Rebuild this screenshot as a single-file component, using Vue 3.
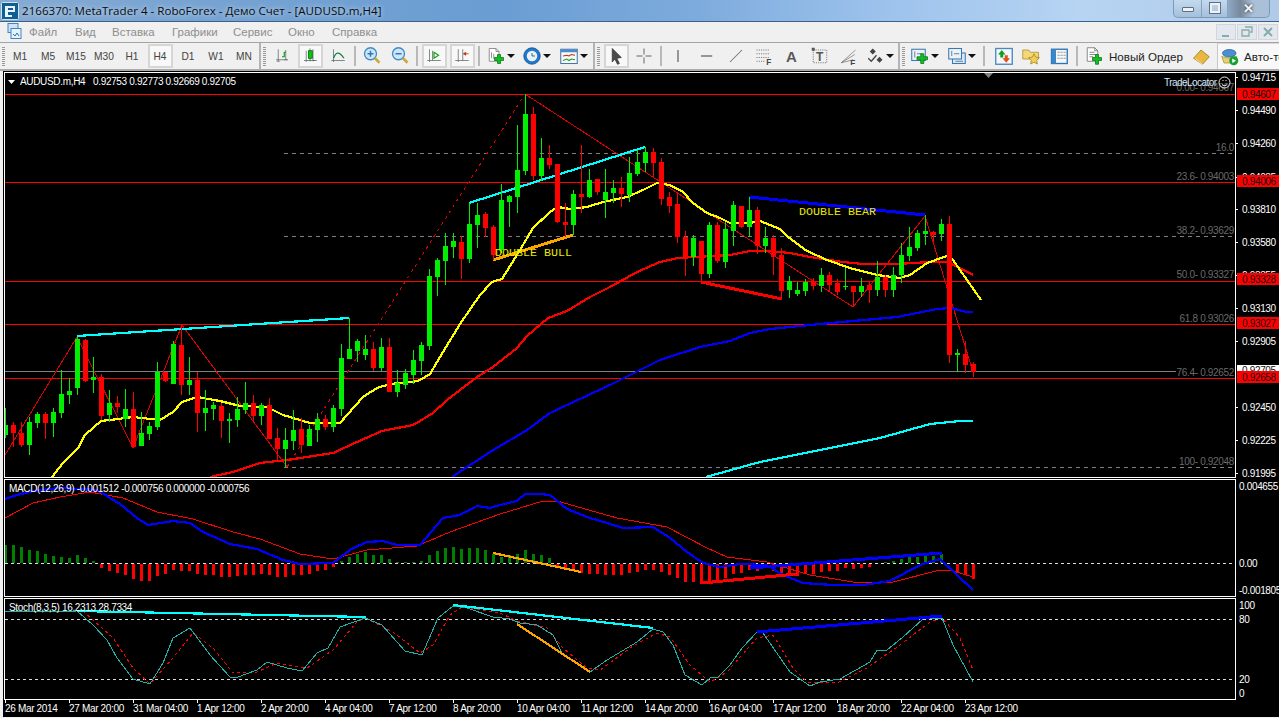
<script setup>
const candles = [
[1,408,438,425,435],[0,422,447,425,433],[0,422,447,433,445],[1,417,455,422,445],[1,412,428,414,423],[0,412,439,414,423],[1,408,437,412,423],[1,370,418,394,413],[1,378,404,391,395],[1,337,395,339,388],
[0,339,382,340,381],[1,357,393,377,380],[0,374,420,377,416],[1,390,422,403,415],[0,396,413,403,407],[1,389,427,409,419],[0,392,448,409,447],[1,412,446,433,446],[1,422,440,426,434],[1,362,430,372,427],
[0,372,382,372,381],[1,341,384,344,384],[0,325,395,345,385],[1,357,395,380,385],[0,372,432,380,413],[1,390,431,408,413],[1,402,420,405,409],[0,403,438,406,421],[1,413,443,419,421],[1,397,427,409,420],
[1,382,414,403,410],[0,395,422,403,416],[1,403,425,405,416],[0,398,439,405,439],[0,428,460,438,449],[1,428,467,440,449],[1,410,450,430,441],[0,418,453,429,445],[1,425,446,429,446],[1,413,442,419,430],
[0,415,430,419,427],[1,405,432,408,427],[1,344,416,358,409],[1,318,359,349,359],[1,339,362,341,351],[1,335,360,349,355],[0,342,371,349,368],[1,338,371,347,368],[0,338,392,347,392],[1,370,397,383,392],
[1,369,389,373,385],[1,350,384,360,375],[1,342,375,345,361],[1,269,350,276,346],[1,258,296,260,277],[1,233,285,246,261],[1,233,258,241,247],[0,236,279,242,259],[1,203,263,224,259],[1,203,248,215,225],
[0,212,237,214,228],[0,225,260,227,255],[1,184,253,200,250],[1,195,227,196,202],[1,125,213,170,197],[1,94,175,114,171],[0,107,180,114,176],[1,138,181,158,176],[0,145,169,158,165],[0,164,223,164,222],
[0,203,237,222,225],[1,190,235,194,225],[0,145,213,194,197],[1,169,198,180,197],[0,179,195,179,192],[1,169,218,192,200],[1,180,203,188,193],[0,177,207,188,194],[1,157,202,173,195],[1,150,176,162,174],
[1,147,172,152,163],[0,148,177,152,163],[0,158,205,162,199],[0,192,213,197,206],[0,193,243,204,237],[0,231,276,237,257],[1,235,266,238,257],[0,241,282,241,274],[1,222,278,225,274],[0,222,263,225,261],
[1,222,268,229,262],[1,201,246,205,231],[0,206,228,206,227],[1,197,237,210,227],[0,207,254,210,246],[1,227,253,238,246],[0,235,275,238,257],[0,248,299,255,291],[1,276,298,281,290],[1,282,296,290,294],
[1,279,296,282,291],[0,278,290,282,286],[1,268,292,275,286],[0,272,292,275,285],[0,279,295,283,292],[1,268,290,286,287],[0,286,307,286,292],[1,278,297,286,292],[0,281,303,285,290],[1,261,296,277,290],
[0,275,297,277,290],[1,267,297,275,290],[1,243,283,255,275],[1,227,261,247,256],[1,230,251,233,248],[1,215,245,231,234],[0,231,242,232,235],[1,219,241,224,234],[0,216,363,224,355],[1,349,372,353,355],
[0,341,373,354,365],[0,362,377,364,372]
].map(([g,h,l,t,b],i)=>({g,h,l,t,b,x:5+8*i}))

const macd = [18,18,16,13,12,9,7,6,5,8,5,2,-4,-7,-9,-11,-15,-17,-17,-12,-10,-6,-7,-7,-10,-11,-11,-13,-13,-12,-11,-11,-10,-11,-13,-13,-11,-11,-10,-7,-6,-3,2,6,9,11,8,8,4,1,1,1,2,8,12,15,16,14,15,15,13,9,
6,8,9,13,9,8,5,-3,-6,-7,-9,-10,-10,-11,-11,-11,-9,-8,-6,-6,-8,-11,-14,-18,-18,-20,-20,-18,-14,-10,-9,-6,-7,-4,-7,-10,-11,-12,-10,-10,-8,-7,-7,-4,-5,-4,-3,0,1,2,4,6,6,7,7,9,0,-9,-11,-15]
  .map((v,i)=>({x:4+8*i,y:v>0?563-v:564,h:Math.abs(v),g:v>0}))

const yellow='52,477 63,463 78,448 85,435 101,421 118,419 133,417 160,420 173,412 182,402 197,397 220,401 240,406 267,407 283,415 310,423 340,423 363,397 377,388 390,384 413,382 420,380 430,374 440,357 460,324 480,295 492,282 502,279 520,250 533,228 550,212 558,207 570,209 587,207 603,202 627,197 643,190 657,183 670,185 683,192 693,203 707,213 720,218 730,223 750,223 760,221 780,229 788,237 807,251 827,260 850,268 877,275 900,278 910,275 927,263 947,256 953,260 967,280 981,300'
const redMa='210,477 233,472 260,463 287,460 333,453 357,442 382,431 413,425 420,421 433,413 447,400 477,377 493,367 517,348 527,336 548,318 567,311 590,297 610,287 637,272 660,262 678,258 730,255 750,251 770,251 790,253 810,257 843,262 863,264 897,264 930,262 947,262 960,268 973,275'
const blueMa='452,477 490,452 527,430 550,413 610,385 660,360 700,347 730,341 750,333 770,329 820,324 853,321 897,317 937,309 950,308 967,312 973,312'
const cyanMa='706,477 760,462 820,450 880,438 930,424 960,421 973,421'
const macdBlue='5,499 17,495 33,491 60,488 97,490 120,504 137,518 148,525 173,521 190,523 203,532 230,544 257,549 283,560 300,564 333,563 353,548 367,542 383,541 397,545 420,545 443,518 460,515 477,506 490,508 500,505 517,501 525,494 540,494 550,495 567,509 587,517 623,528 653,527 670,538 687,552 703,563 720,567 740,564 767,565 783,575 803,583 833,585 863,585 890,581 920,565 940,559 957,575 973,590'
const macdRed='5,518 33,503 60,497 90,492 123,498 157,512 193,519 233,532 260,539 300,554 333,559 367,550 417,546 450,532 500,514 520,508 543,501 557,501 617,518 667,527 707,548 727,557 767,562 810,575 853,582 893,582 940,570 950,570 973,577'
const stMain='5,612 77,611 93,625 107,640 117,658 133,679 150,684 163,663 173,638 190,628 210,655 230,677 238,677 257,670 267,662 287,668 302,671 317,653 328,648 340,627 365,618 382,625 405,651 422,655 438,618 453,606 467,608 493,617 510,619 520,623 537,625 553,635 563,655 590,672 607,660 637,642 653,629 663,632 673,645 685,675 702,685 710,678 718,677 730,665 742,648 757,632 763,633 790,672 810,686 820,682 840,679 870,662 877,650 887,650 903,637 923,619 942,618 953,645 973,682'
const stSig='5,612 83,611 113,638 133,668 150,684 173,658 193,633 213,648 233,673 257,672 277,663 307,668 333,650 357,622 365,618 393,632 420,653 433,645 450,615 462,607 500,613 517,621 547,628 563,648 587,668 600,670 633,646 657,633 670,637 690,665 710,682 727,672 757,638 773,635 793,668 807,682 837,683 867,668 900,645 930,622 942,618 960,638 973,670'

const redLines=[94,182,281,324,378]
const fibLines=[153,182,236,467]
const fibLabels=[['0.00- 0.94607',91],['16.0',151],['23.6- 0.94003',180],['38.2- 0.93629',234],['50.0- 0.93327',278],['61.8 0.93026',322],['76.4- 0.92652',376],['100- 0.92048',465]]
const priceLabels=[['0.94715',77],['0.94490',110],['0.94260',143],['0.94035',177],['0.93810',209],['0.93580',242],['0.93355',275],['0.93130',308],['0.92905',341],['0.92450',407],['0.92225',440],['0.91995',473]]
const redLabels=[['0.94607',94],['0.94006',181],['0.93328',279],['0.93027',323],['0.92658',377]]
const sideLabels=[['0.004655',486],['0.00',563],['-0.001805',590],['100',605],['80',619],['20',679],['0',693]]
const times=['26 Mar 2014','27 Mar 20:00','31 Mar 04:00','1 Apr 12:00','2 Apr 20:00','4 Apr 04:00','7 Apr 12:00','8 Apr 20:00','10 Apr 04:00','11 Apr 12:00','14 Apr 20:00','16 Apr 04:00','17 Apr 12:00','18 Apr 20:00','22 Apr 04:00','23 Apr 12:00']
  .map((t,i)=>({t,x:5+64*i}))

const menu=[['Файл',29],['Вид',75],['Вставка',112],['Графики',172],['Сервис',233],['Окно',288],['Справка',332]]
  .map(([t,x],i,a)=>({t,w:(i<a.length-1?a[i+1][1]:x+60)-x}))

const ax='#5a676e'
const icons={
 bars:`<path d="M7 3v16M4 17h16M17 4v13M15 17h4M5 19h4" stroke="${ax}" fill="none"/><path d="M12 13h3V7h2" stroke="#00a000" fill="none" stroke-width="1.5"/>`,
 candle:`<path d="M7 5v15M4 18h17M16 3v16M14 18h5" stroke="${ax}" fill="none"/><path d="M12 2v17" stroke="#206020"/><rect x="10" y="5" width="5" height="10" fill="#00d000" stroke="#105010"/>`,
 line:`<path d="M6 3v17M3 18h18" stroke="${ax}" fill="none"/><path d="M6 15C9 7 13 5 20 15" stroke="#108040" stroke-width="1.6" fill="none"/>`,
 zin:`<circle cx="10" cy="9" r="8" fill="#cfe6f7" stroke="#3f8cc8" stroke-width="1.8"/><path d="M6 9h8M10 5v8" stroke="#2f78b8" stroke-width="2"/><path d="M16 15l6 6" stroke="#d0a838" stroke-width="3.500"/>`,
 zout:`<circle cx="10" cy="9" r="8" fill="#cfe6f7" stroke="#3f8cc8" stroke-width="1.8"/><path d="M6 9h8" stroke="#2f78b8" stroke-width="2"/><path d="M16 15l6 6" stroke="#d0a838" stroke-width="3.500"/>`,
 shift:`<path d="M6 3v17M3 18h18M10 5v13" stroke="${ax}" fill="none"/><path d="M12 7l6 4-6 4z" fill="#fff" stroke="#10a010" stroke-width="1.6"/>`,
 scroll:`<path d="M7 3v17M3 18h18M13 3v15" stroke="${ax}" fill="none"/><path d="M14 9h7M14 9l3-2v4z" stroke="#c03010" fill="#c03010"/>`,
 newch:`<path d="M3 2h9l4 4v13H3z" fill="#fff" stroke="#707070"/><path d="M12 2v4h4M6 7v8M9 9v7" stroke="#707070" fill="none"/><path d="M14 10h4v4h4v4h-4v4h-4v-4h-4v-4h4z" fill="#10c020" stroke="#087010"/>`,
 clock:`<circle cx="12" cy="12" r="11" fill="#1f79c8" stroke="#0d4f90"/><circle cx="12" cy="12" r="7" fill="#e8f2fb"/><path d="M12 8v4h4" stroke="#333" fill="none"/>`,
 tpl:`<rect x="1" y="3" width="22" height="19" fill="#f8f8f8" stroke="#4878a8" stroke-width="1.4"/><rect x="1" y="3" width="22" height="4" fill="#4a8ccc"/><path d="M4 12l5-1 3 1 3-2 5 1" stroke="#c03010" fill="none" stroke-width="1.4"/><path d="M4 18l5-2 3 2 3-2 5 1" stroke="#20a020" fill="none" stroke-width="1.4"/>`,
 cursor:`<path d="M7 2l12 12-6 1 3.500 7-2.500 1-3.500-7-3.500 4z" fill="#4a4a4a" stroke="#333"/>`,
 cross:`<path d="M12 2v8M12 14v8M2 12h8M14 12h8" stroke="#555" stroke-width="1.2"/>`,
 vert:`<path d="M12 4v16" stroke="#444" stroke-width="1.4"/>`,
 horiz:`<path d="M4 12h15" stroke="#444" stroke-width="1.4"/>`,
 diag:`<path d="M4 20L20 4" stroke="#777" stroke-width="1.4"/>`,
 fib:`<path d="M2 4h17M2 9h17M2 14h17M2 19h11" stroke="#555" stroke-dasharray="1.500 1.500" fill="none"/><text x="15" y="24" font-family="Liberation Sans,sans-serif" font-size="11" font-weight="700" fill="#444">F</text>`,
 a:`<text x="4" y="20" font-family="Liberation Sans,sans-serif" font-size="20" font-weight="700" fill="#5a5a5a">A</text>`,
 t:`<rect x="3" y="4" width="18" height="17" fill="none" stroke="#555" stroke-dasharray="1.500 1.500"/><rect x="1" y="1" width="4" height="4" fill="#555"/><text x="6.500" y="18.500" font-family="Liberation Sans,sans-serif" font-size="16" font-weight="700" fill="#555">T</text>`,
 fan:`<path d="M3 21L22 4M3 21l18-11M3 21l16-4" stroke="#777" fill="none"/><text x="15" y="25" font-family="Liberation Sans,sans-serif" font-size="11" font-weight="700" fill="#444">F</text>`,
 tick:`<path d="M5 6l4-4 4 4-4 4zM14 17l4-4 4 4-4 4z" fill="#444"/><path d="M3 15l4 4 7-8" stroke="#444" fill="none" stroke-width="1.8"/>`,
 add:`<rect x="1" y="3" width="18" height="15" fill="#eaf3fb" stroke="#3a78b0" stroke-width="1.4"/><path d="M5 6v8M8 9h7" stroke="#555"/><path d="M13 9h4v4h5v4h-5v5h-4v-5H8v-4h5z" fill="#10c020" stroke="#087010"/>`,
 dbl:`<rect x="6" y="8" width="17" height="14" fill="#dbeaf8" stroke="#3a78b0" stroke-width="1.4"/><rect x="1" y="2" width="17" height="14" fill="#eaf3fb" stroke="#3a78b0" stroke-width="1.4"/><path d="M5 5v7M8 9h7M10 19h10" stroke="#555"/>`,
 arrows:`<rect x="1" y="2" width="22" height="21" fill="#f4f8fc" stroke="#4a88c0" stroke-width="1.8"/><path d="M9 4l5 6h-3v4H7v-4H4z" fill="#10a020"/><path d="M15 21l-5-6h3v-4h4v4h3z" fill="#e05020"/>`,
 star:`<path d="M1 4h8l2 3h11v9H1z" fill="#f4d878" stroke="#a88830"/><path d="M16 9l2.200 4.500 5 .7-3.600 3.500.9 5-4.500-2.400-4.500 2.400.9-5-3.600-3.500 5-.7z" fill="#f0d050" stroke="#a08020"/>`,
 book:`<rect x="2" y="3" width="21" height="19" fill="#f4f8fc" stroke="#2f74b0" stroke-width="1.8"/><rect x="2" y="3" width="6" height="19" fill="#3a88c8"/><path d="M10 7h11M10 11h11M10 15h11" stroke="#7a7a7a" stroke-dasharray="3 1"/>`,
 order:`<path d="M3 1h10l4 4v14H3z" fill="#fff" stroke="#666"/><path d="M13 1v4h4M6 7h7M6 10h9M6 13h5" stroke="#666" fill="none"/><path d="M14 10h4v4h4v4h-4v5h-4v-5h-4v-4h4z" fill="#10c020" stroke="#087010"/>`,
 gold:`<path d="M2 15L12 4l11 9-9 10z" fill="#e8b840" stroke="#9a7018"/><path d="M4 15l10 8" stroke="#fff3c0"/>`,
 auto:`<ellipse cx="11" cy="7" rx="9" ry="5" fill="#4b8fd0" stroke="#2a5f98"/><path d="M1 11c5 3 15 3 20 0l-2 9H4z" fill="#e8d070" stroke="#a89030"/><circle cx="17" cy="17" r="6" fill="#18a030"/><path d="M15 14l5 3-5 3z" fill="#fff"/>`
}

const tf=['M1','M5','M15','M30','H1','H4','D1','W1','MN']
const tools=[
 {k:'grip',w:6},
 ...tf.map(t=>({k:'tf',w:28,t,on:t==='H4'})),
 {k:'sp',w:1},{k:'grip',w:9,line:1},
 {k:'btn',w:28,i:'bars'},{k:'btn',w:28,i:'candle',on:1},{k:'btn',w:28,i:'line'},
 {k:'sep',w:6},{k:'btn',w:28,i:'zin'},{k:'btn',w:28,i:'zout'},
 {k:'sep',w:6},{k:'btn',w:28,i:'shift',on:1},{k:'btn',w:28,i:'scroll',on:1},
 {k:'sep',w:6},
 {k:'drop',w:35,i:'newch',p:2},{k:'drop',w:36,i:'clock',p:3},{k:'drop',w:40,i:'tpl',p:4},
 {k:'grip',w:9,line:1},
 {k:'btn',w:28,i:'cursor',on:1},{k:'btn',w:28,i:'cross'},{k:'sep',w:6},
 {k:'btn',w:28,i:'vert'},{k:'btn',w:30,i:'horiz'},{k:'btn',w:28,i:'diag'},{k:'btn',w:28,i:'fib'},{k:'btn',w:28,i:'a'},{k:'btn',w:28,i:'t'},{k:'btn',w:28,i:'fan'},
 {k:'drop',w:36,i:'tick',p:1},{k:'grip',w:9,line:1},
 {k:'drop',w:35,i:'add',p:1},{k:'drop',w:36,i:'dbl',p:3},
 {k:'sep',w:12},{k:'btn',w:27,i:'arrows'},{k:'btn',w:28,i:'star'},{k:'btn',w:28,i:'book'},{k:'sep',w:8}
]
</script>

<template>
  <div class="app">
    <header class="title">
      <svg class="logo" width="18" height="18" viewBox="0 0 18 18">
        <rect x=".5" y=".5" width="17" height="17" rx="1" fill="#0f5f93" stroke="#cfe2f2"/>
        <path d="M4 4h10v6H7v3h4v2H4zM7 6v2h5V6z" fill="#e8f4fb" fill-rule="evenodd"/>
      </svg>
      <span class="title-text">2166370: MetaTrader 4 - RoboForex - Демо Счет - [AUDUSD.m,H4]</span>
      <div class="win">
        <span class="wb min"><i></i></span>
        <span class="wb max"><i></i></span>
        <span class="wb close">✕</span>
      </div>
    </header>

    <nav class="menu">
      <svg class="mdi" width="20" height="20" viewBox="0 0 20 20">
        <rect x="5" y="1.500" width="10" height="9" fill="#cfe3f5" stroke="#3c86c6"/>
        <rect x="8" y="6.500" width="10" height="10" fill="#e8f2fb" stroke="#3c86c6"/>
        <path d="M10 12l2 2 2-3 2 3" stroke="#2f70a8" fill="none"/>
      </svg>
      <span v-for="m in menu" :key="m.t" class="mi" :style="{ width: m.w + 'px' }">{{ m.t }}</span>
      <div class="mdibtns">
        <span class="mb"><svg width="12" height="12"><path d="M2 10h7" stroke="#8aa" stroke-width="2"/></svg></span>
        <span class="mb"><svg width="12" height="12"><path d="M4 1h7v5H9M1 4h7v6H1z" stroke="#8aa" fill="none" stroke-width="1.300"/></svg></span>
        <span class="mb"><svg width="12" height="12"><path d="M2 2l8 8M10 2l-8 8" stroke="#8aa" stroke-width="2"/></svg></span>
      </div>
    </nav>

    <div class="toolbar">
      <template v-for="(t, n) in tools" :key="n">
        <span v-if="t.k === 'grip'" class="grip" :class="{ line: t.line }" :style="{ width: t.w + 'px' }"><i></i></span>
        <span v-else-if="t.k === 'sep'" class="sep" :style="{ width: t.w + 'px' }"><i></i></span>
        <span v-else-if="t.k === 'sp'" :style="{ width: t.w + 'px' }"></span>
        <span v-else-if="t.k === 'tf'" class="tb" :style="{ width: t.w + 'px' }"><span class="face tf" :class="{ on: t.on }">{{ t.t }}</span></span>
        <span v-else-if="t.k === 'btn'" class="tb" :style="{ width: t.w + 'px' }">
          <span class="face" :class="{ on: t.on }"><svg class="ic" viewBox="0 0 24 24" v-html="icons[t.i]"></svg></span>
        </span>
        <span v-else class="tb dropbtn" :style="{ width: t.w + 'px', paddingLeft: t.p + 'px' }">
          <svg class="ic" viewBox="0 0 24 24" v-html="icons[t.i]"></svg><b class="arrow"></b>
        </span>
      </template>
      <span class="tb order">
        <svg class="ic" viewBox="0 0 24 24" v-html="icons.order"></svg><span>Новый Ордер</span>
      </span>
      <span class="tb goldb"><svg class="ic" viewBox="0 0 24 24" v-html="icons.gold"></svg></span>
      <span class="tb auto">
        <svg class="ic" viewBox="0 0 24 24" v-html="icons.auto"></svg><span>Авто-торговля</span>
      </span>
    </div>

    <svg class="chart" width="1279" height="646" viewBox="0 71 1279 646">
      <defs>
        <clipPath id="cm"><rect x="5" y="73" width="1230" height="404"/></clipPath>
        <clipPath id="cd"><rect x="5" y="480" width="1230" height="116"/></clipPath>
        <clipPath id="cs"><rect x="5" y="599" width="1230" height="100"/></clipPath>
      </defs>
      <rect x="3" y="71" width="1276" height="646" fill="#000"/>

      <!-- main -->
      <g clip-path="url(#cm)" class="ln">
        <line x1="5" x2="1176" y1="371.500" y2="371.500" stroke="#808080"/>
        <line v-for="y in fibLines" :key="y" x1="284" x2="1233" :y1="y + .5" :y2="y + .5" stroke="#808080" stroke-dasharray="4 4"/>
        <line v-for="y in redLines" :key="y" x1="5" x2="1235" :y1="y + .5" :y2="y + .5" stroke="#f00"/>
        <polyline points="5,455 77,337 133,448 182,325 287,467" fill="none" stroke="#e00000"/>
        <polyline points="287,467 525,94" fill="none" stroke="#e00000" stroke-dasharray="3 4"/>
        <polyline points="525,94 853,307 925,216 973,372" fill="none" stroke="#e00000"/>
        <polyline points="77,336 349,318" fill="none" stroke="#00ffff" stroke-width="2.200"/>
        <polyline points="469,203 645,147" fill="none" stroke="#00ffff" stroke-width="2.200"/>
        <polyline points="493,260 573,235" fill="none" stroke="#ffa500" stroke-width="3"/>
        <polyline points="749,197 925,215" fill="none" stroke="#0000ff" stroke-width="3"/>
        <polyline points="701,282 782,299" fill="none" stroke="#ff0000" stroke-width="3"/>
        <polyline :points="cyanMa" fill="none" stroke="#00ffff" stroke-width="2.200"/>
        <polyline :points="blueMa" fill="none" stroke="#0000ff" stroke-width="2.200"/>
        <polyline :points="redMa" fill="none" stroke="#ff0000" stroke-width="2.200"/>
        <polyline :points="yellow" fill="none" stroke="#ffff00" stroke-width="2.200"/>
        <g v-for="c in candles" :key="c.x" :fill="c.g ? '#00ee00' : '#f00'">
          <rect :x="c.x" :y="c.h" width="1" :height="c.l - c.h"/>
          <rect :x="c.x - 2" :y="c.t" width="5" :height="Math.max(c.b - c.t, 1)"/>
        </g>
      </g>
      <text x="495" y="256" class="mono">DOUBLE BULL</text>
      <text x="799" y="215" class="mono">DOUBLE BEAR</text>
      <text v-for="f in fibLabels" :key="f[0]" x="1234" :y="f[1]" text-anchor="end" class="tx fibt">{{ f[0] }}</text>
      <text x="1164" y="86" class="tx loc">TradeLocator</text>
      <g fill="none" stroke="#eee">
        <circle cx="1224.500" cy="82.500" r="5.500"/>
        <path d="M1222 84.500c1 1.500 4 1.500 5 0"/>
        <path d="M1222.500 80.500h1M1225.500 80.500h1"/>
      </g>
      <path d="M984 73h9l-4.500 5z" fill="#808080"/>
      <path d="M8 80h7l-3.500 4z" fill="#fff"/>
      <text x="20" y="85" class="tx">AUDUSD.m,H4</text>
      <text x="93" y="85" class="tx">0.92753 0.92773 0.92669 0.92705</text>

      <!-- macd -->
      <g clip-path="url(#cd)" class="ln">
        <line x1="5" x2="1233" y1="563.500" y2="563.500" stroke="#ddd" stroke-dasharray="3 3"/>
        <rect v-for="b in macd" :key="b.x" :x="b.x" :y="b.y" width="3" :height="b.h" :fill="b.g ? '#008000' : '#f00'"/>
        <polyline :points="macdRed" fill="none" stroke="#f00"/>
        <polyline :points="macdBlue" fill="none" stroke="#0000ff" stroke-width="2.200"/>
        <polyline points="493,553 581,572" fill="none" stroke="#ffa500" stroke-width="2.200"/>
        <polyline points="750,568 942,553" fill="none" stroke="#0000ff" stroke-width="3"/>
        <polyline points="702,583 797,574" fill="none" stroke="#f00" stroke-width="3"/>
      </g>
      <text x="9" y="492" class="tx">MACD(12,26,9) -0.001512 -0.000756 0.000000 -0.000756</text>

      <!-- stochastic -->
      <g clip-path="url(#cs)" class="ln">
        <line x1="5" x2="1233" y1="619.500" y2="619.500" stroke="#ddd" stroke-dasharray="3 3"/>
        <line x1="5" x2="1233" y1="679.500" y2="679.500" stroke="#ddd" stroke-dasharray="3 3"/>
        <polyline :points="stSig" fill="none" stroke="#f00" stroke-dasharray="3 3"/>
        <polyline :points="stMain" fill="none" stroke="#20b2aa"/>
        <polyline points="77,611 366,617" fill="none" stroke="#00ffff" stroke-width="2.200"/>
        <polyline points="453,605 653,628" fill="none" stroke="#00ffff" stroke-width="2.200"/>
        <polyline points="517,624 590,672" fill="none" stroke="#ffa500" stroke-width="2.200"/>
        <polyline points="757,632 942,616" fill="none" stroke="#0000ff" stroke-width="3"/>
      </g>
      <text x="9" y="611" class="tx">Stoch(8,3,5) 16.2313 28.7334</text>

      <!-- frames -->
      <g fill="none" stroke="#fff" class="ln">
        <rect x="4.500" y="72.500" width="1231" height="405"/>
        <rect x="4.500" y="479.500" width="1231" height="117"/>
        <rect x="4.500" y="598.500" width="1231" height="101"/>
      </g>

      <!-- axes -->
      <g v-for="p in priceLabels" :key="p[0]">
        <rect x="1236" :y="p[1]" width="2" height="1" fill="#fff"/>
        <text x="1242" :y="p[1] + 4" class="tx">{{ p[0] }}</text>
      </g>
      <rect x="1237" y="365" width="42" height="8" fill="#fff"/>
      <text x="1242" y="374" class="tx dark">0.92705</text>
      <g v-for="p in redLabels" :key="p[0]">
        <rect x="1237" :y="p[1] - 6" width="42" height="12" fill="#f00"/>
        <text x="1242" :y="p[1] + 4" class="tx dark">{{ p[0] }}</text>
      </g>
      <text v-for="p in sideLabels" :key="p[0]" x="1239" :y="p[1] + 4" class="tx">{{ p[0] }}</text>
      <g v-for="t in times" :key="t.t">
        <rect :x="t.x" y="699" width="1" height="4" fill="#fff"/>
        <text :x="t.x" y="712" class="tx">{{ t.t }}</text>
      </g>
    </svg>
  </div>
</template>

<style scoped>
.app { width: 1279px; height: 718px; background: #f0f0f0; overflow: hidden; display: flex; flex-direction: column; font-family: "Liberation Sans", Arial, sans-serif; }
.title { height: 21px; flex: none; border-bottom: 1px solid #3f5f86; display: flex; align-items: center; position: relative;
  background: linear-gradient(90deg, #86abd2 0, #77a3d2 200px, #6a9dd3 500px, #7eabdd 700px, #9cc2ec 880px, #b7d4f3 1080px, #b0cbe8 1279px); }
.logo { margin: 0 3px 0 1px; flex: none; }
.title-text { font: 11.600px "Open Sans", "Noto Sans", sans-serif; color: #0c0c0c; white-space: nowrap; text-shadow: 0 0 5px #dfeefc; }
.win { margin-left: auto; margin-right: 9px; margin-top: -4px; display: flex; height: 17px; border: 1px solid #7b99b8; border-top: 0; border-radius: 0 0 5px 5px; background: linear-gradient(#c4d9ee, #a4c0dc); }
.wb { display: flex; align-items: center; justify-content: center; border-right: 1px solid #86a4c2; color: #fff; }
.min { width: 27px; } .max { width: 25px; }
.close { width: 41px; border-right: 0; font-size: 13px; font-weight: 700; color: #f4f4f4; text-shadow: 0 0 3px #222; background: linear-gradient(90deg, #8ea9c6, #79889b 30%, #a9c0d8 60%); border-radius: 0 0 5px 0; }
.min i { width: 10px; height: 3px; background: #f0f0f0; border: 1px solid #5a6f88; border-radius: 1px; margin-top: 3px; }
.max i { width: 6px; height: 6px; border: 2px solid #f0f0f0; outline: 1px solid #5a6f88; }

.menu { height: 20px; flex: none; display: flex; align-items: center; background: #f0f0f0; position: relative; }
.mdi { flex: none; margin: 0 6px 0 3px; width: 20px; }
.mi { font-size: 11.500px; color: #8e8e8e; flex: none; }
.mdibtns { margin-left: auto; display: flex; height: 16px; }
.mb { width: 18px; margin-right: 1px; display: flex; align-items: center; justify-content: center; background: #e2e8ee; border: 1px solid #fbfbfb; outline: 1px solid #d0d6dc; outline-offset: -1px; }

.toolbar { height: 26px; flex: none; display: flex; align-items: center; background: #f0f0f0; border-top: 1px solid #a4a4a4; border-bottom: 2px solid #ababab; overflow: hidden; }
.grip { height: 100%; display: flex; align-items: center; justify-content: center; flex: none; }
.grip i { display: block; width: 3px; height: 19px; background: repeating-linear-gradient(#9a9a9a 0 1px, transparent 1px 2px); }
.grip.line { border-left: 2px solid #b4b4b4; box-sizing: border-box; }
.sep { height: 100%; display: flex; justify-content: center; align-items: center; flex: none; }
.sep i { display: block; width: 2px; height: 20px; background: #b8b8b8; }
.tb { height: 100%; flex: none; display: flex; align-items: center; justify-content: center; box-sizing: border-box; }
.face { width: 25px; height: 24px; box-sizing: border-box; display: flex; align-items: center; justify-content: center; border: 2px solid transparent; }
.face.on { border-color: #d6d6d6; background: #f8f8f8; }
.ic { flex: none; width: 18px; height: 18px; margin: 0 3px; }
.face .ic { margin: 0; }
.tf { font-size: 10.200px; color: #444; }
.dropbtn { justify-content: flex-start; }
.arrow { width: 0; height: 0; border: 4px solid transparent; border-top: 4px solid #111; border-bottom: 0; margin-left: -1px; }
.order { width: 107px; justify-content: flex-start; padding-left: 1px; gap: 3px; font-size: 11.600px; color: #222; white-space: nowrap; }
.goldb { width: 29px; padding-right: 3px; }
.auto { flex: 1; justify-content: flex-start; gap: 2px; font-size: 11.600px; color: #222; white-space: nowrap; overflow: hidden; background: #f8f8f8; border-left: 1px solid #c8c8c8; border-top: 1px solid #d8d8d8; }

.chart { display: block; flex: none; }
.ln { shape-rendering: crispEdges; }
.tx { font: 10px "Liberation Sans", Arial, sans-serif; letter-spacing: -.33px; fill: #fff; }
.fibt { fill: #6a6a6a; }
.loc { fill: #d8e8f8; letter-spacing: -.55px; }
.dark { fill: #111; }
.mono { font: 11.670px "Liberation Mono", monospace; fill: #e8e800; }
</style>
